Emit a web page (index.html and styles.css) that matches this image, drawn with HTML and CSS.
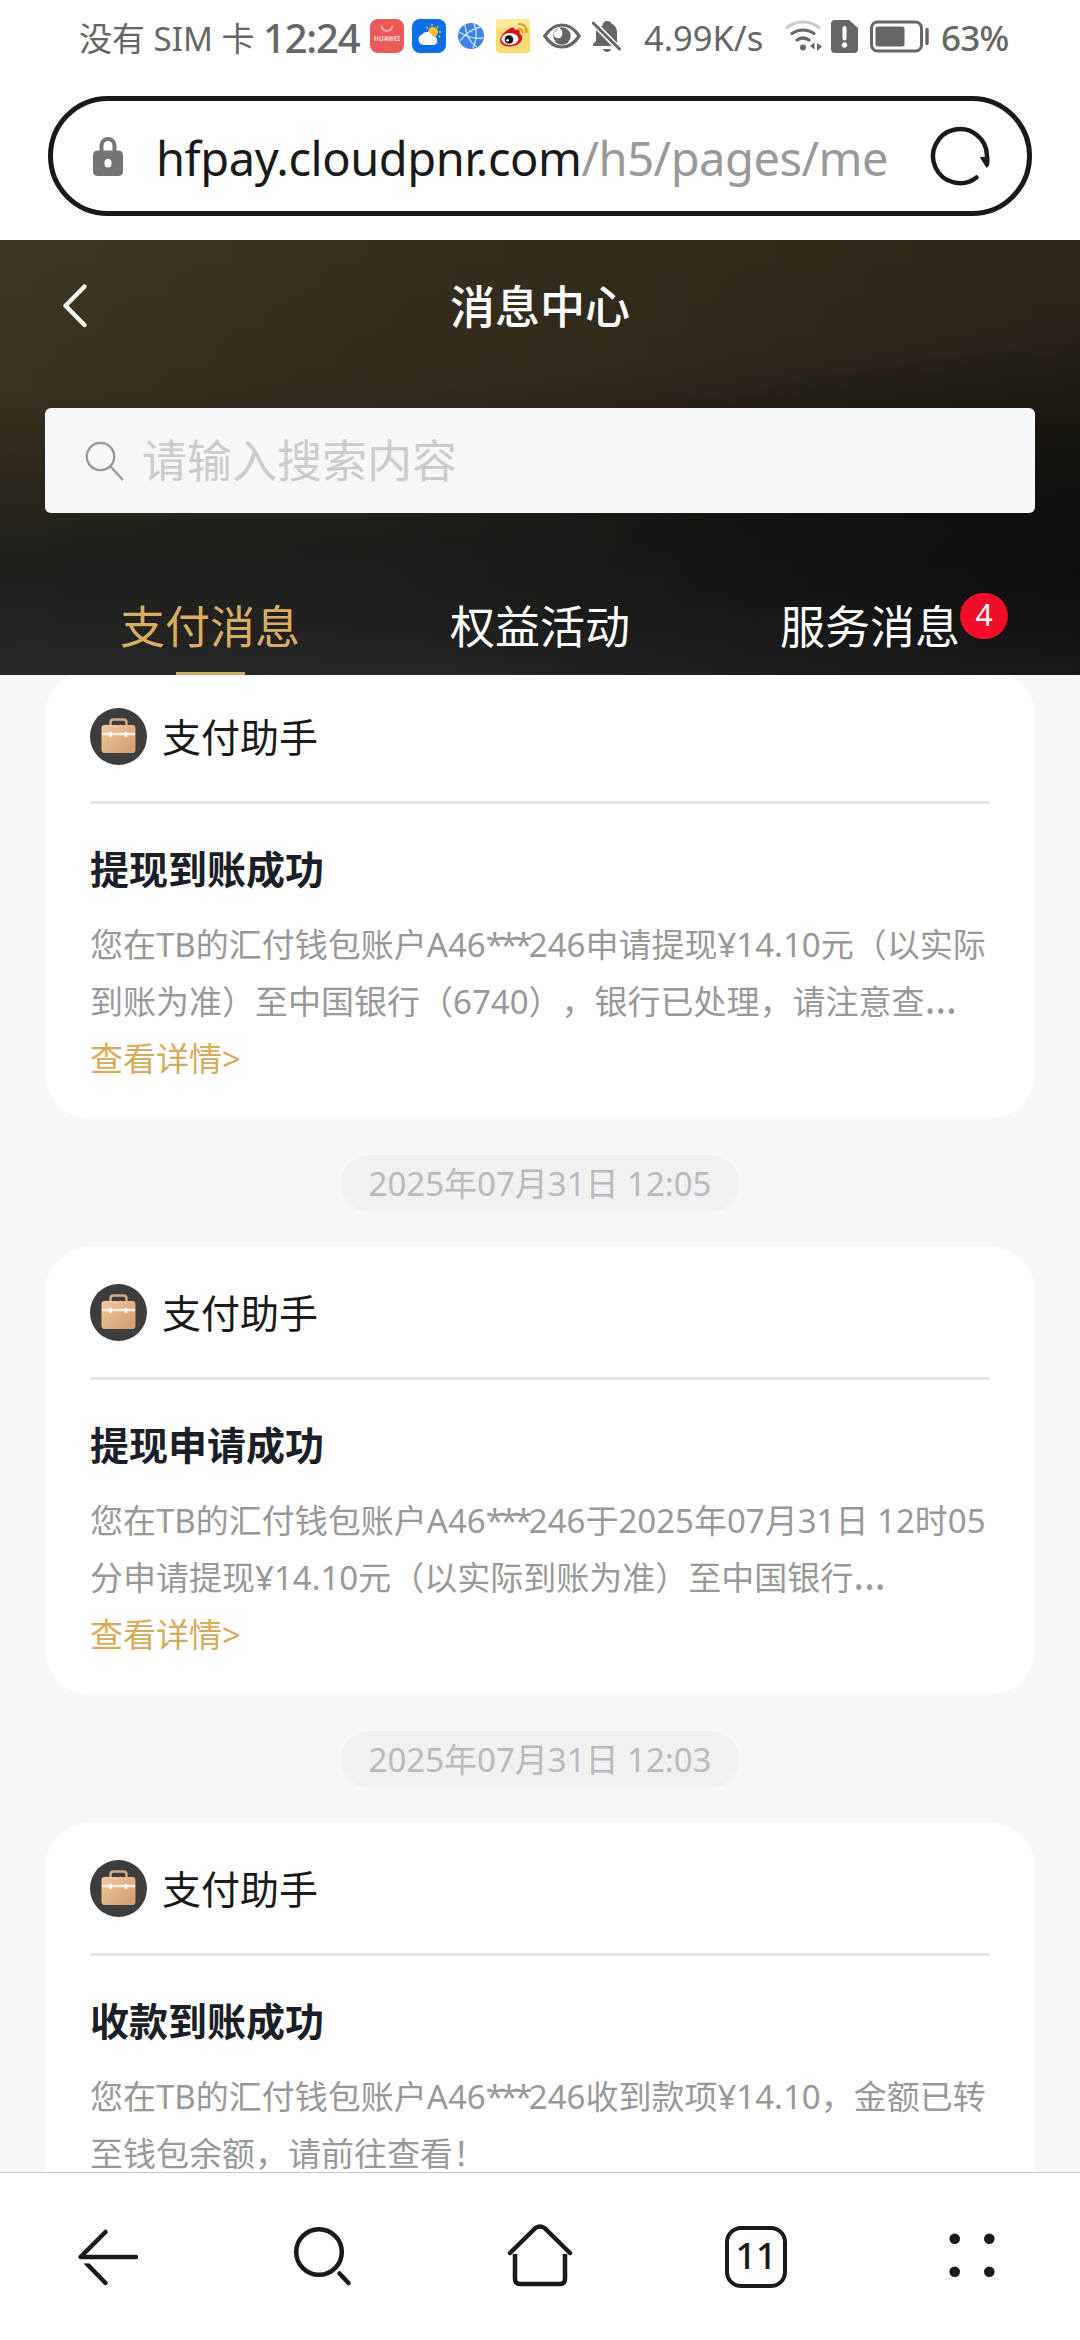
FILE: index.html
```html
<!DOCTYPE html>
<html lang="zh-CN">
<head>
<meta charset="utf-8">
<title>消息中心</title>
<link rel="stylesheet" href="styles.css">
</head>
<body>
<svg class="defs" width="0" height="0" aria-hidden="true">
  <defs>
    <linearGradient id="case" x1="0" y1="0" x2="1" y2="1">
      <stop offset="0" stop-color="#f3c9a2"/><stop offset="1" stop-color="#d09a6c"/>
    </linearGradient>
    <symbol id="briefcase" viewBox="0 0 57 57">
      <circle cx="28.500" cy="28.500" r="28.500" fill="#3d3d3d"/>
      <path d="M20.500 18v-3.500q0-3 3-3h10q3 0 3 3V18" fill="none" stroke="#d5ab88" stroke-width="2.400"/>
      <rect x="11.500" y="17" width="34" height="28" rx="3" fill="url(#case)"/>
      <path d="M12 26h33" stroke="#fff0e0" stroke-width="2.500"/>
      <path d="M20.500 24v5M36 24v5" stroke="#fff" stroke-width="2.500"/>
    </symbol>
  </defs>
</svg>
<div class="screen">
  <div class="status">
    <span class="carrier">没有 SIM 卡</span>
    <span class="clock">12:24</span>
    <svg class="app-huawei" width="34" height="34" viewBox="0 0 34 34"><rect width="34" height="34" rx="8" fill="#ea5a58"/><path d="M11.500 6.500a5.500 5.500 0 0 0 11 0" fill="none" stroke="#fbb" stroke-width="1.500"/><text class="huawei-word" x="17" y="22" text-anchor="middle" textLength="26" lengthAdjust="spacingAndGlyphs">HUAWEI</text></svg>
    <svg class="app-weather" width="34" height="34" viewBox="0 0 34 34"><rect width="34" height="34" rx="8" fill="#0c6fe8"/><circle cx="21" cy="13" r="5" fill="#fcc02c"/><path d="M20 5v2M26 7.500l-1 1.500M29 13h-2M28 18l-1.500-1M14.500 8l1.500 1.500" stroke="#fcc02c" stroke-width="1.600"/><path d="M11 26a5.500 5.500 0 0 1-1-10.500 6 6 0 0 1 10.500 1.500A4.600 4.600 0 0 1 22 26z" fill="#fff"/></svg>
    <svg class="app-globe" width="26" height="26" viewBox="0 0 26 26"><circle cx="13" cy="13" r="13" fill="#3f83e8"/><path d="M7 1.500Q8 17 19 24M22 4Q10 7 2 18M1 9Q14 17 25 15M16 .5Q21 12 15 25" fill="none" stroke="#cfe2ff" stroke-width="1.300"/></svg>
    <svg class="app-weibo" width="34" height="34" viewBox="0 0 34 34"><rect width="34" height="34" rx="4" fill="#fbdc72"/><rect width="34" height="10" rx="4" fill="#fde99b"/><path d="M14 9.500c3-2 5-1 4.500 1.500 4-1.500 6 0 5 3.500 5 2 3.500 12-9 13C4 28 2.500 21 5.500 17c2-3 5-6 8.500-7.500z" fill="#d8121c"/><ellipse cx="14" cy="20" rx="8.500" ry="6" fill="#fff"/><circle cx="13" cy="20.500" r="4.300" fill="#111"/><circle cx="11.600" cy="21.300" r="1.300" fill="#fff"/><path d="M22 9.500q5-.5 4.500 4.500M22 5q9-.5 8.500 9" fill="none" stroke="#dc9b1a" stroke-width="2"/></svg>
    <svg class="eye" width="38" height="26" viewBox="0 0 38 26"><path d="M1.800 13Q9 2 19 2t17.200 11Q29 24 19 24T1.800 13z" fill="none" stroke="#666" stroke-width="3.200"/><circle cx="19" cy="13" r="8.700" fill="#666"/><path d="M19 12.500a4.500 4.500 0 0 1-8.600-1.900L16 4.800a6.500 6.500 0 0 1 3 7.700z" fill="#fff"/></svg>
    <svg class="bell" width="30" height="33" viewBox="0 0 30 33"><path d="M10.500 5.500Q11 1 15 1t4.500 2.500Q25 6 25 13v9l2 4H1v-2l3-3v-8q0-3 1.500-5z" fill="#666"/><path d="M11 29h8q-1 3-4 3t-4-3z" fill="#666"/><path d="M0 1.500L29 31" stroke="#fff" stroke-width="6"/><path d="M1.200 3L27.500 29" stroke="#666" stroke-width="3" stroke-linecap="round"/></svg>
    <span class="speed">4.99K/s</span>
    <svg class="wifi" width="38" height="32" viewBox="0 0 38 32"><g fill="none" stroke-linecap="round" stroke-width="3.200"><path d="M2 7.500Q9 2 18 2t16 5.500" stroke="#ccc"/><path d="M7 13.500Q12 10 18 10t11 3.500" stroke="#666"/><path d="M12 20q6-4 12 0" stroke="#666"/></g><circle cx="18" cy="27.500" r="3" fill="#666"/><path d="M29.500 22.500v7l-4.500-3.500zM32 23v8l5-4.500z" fill="#666"/></svg>
    <svg class="sim" width="27" height="33" viewBox="0 0 27 33"><path d="M4 0h14l9 8v21q0 4-4 4H4q-4 0-4-4V4q0-4 4-4z" fill="#666"/><path d="M13.500 8v10.500" stroke="#fff" stroke-width="4" stroke-linecap="round"/><circle cx="13.500" cy="25" r="2.700" fill="#fff"/></svg>
    <svg class="battery" width="60" height="33" viewBox="0 0 60 33"><rect x="1.500" y="2" width="50" height="29" rx="6" fill="none" stroke="#666" stroke-width="3"/><rect x="5.500" y="6.500" width="29" height="20" rx="2.500" fill="#666"/><path d="M57 9.500v14" stroke="#666" stroke-width="3.400" stroke-linecap="round"/></svg>
    <span class="percent">63%</span>
  </div>

  <div class="address">
    <svg width="30" height="40" viewBox="0 0 30 40"><path d="M8.500 16V9.500a6.500 6.500 0 0 1 13 0V16" fill="none" stroke="#757575" stroke-width="4"/><path fill-rule="evenodd" d="M5 14.500h20q5 0 5 5V35q0 5-5 5H5q-5 0-5-5V19.500q0-5 5-5zM15 23a3.500 3.500 0 0 0-3.500 3.500v1.500a3.500 3.500 0 0 0 7 0v-1.500A3.500 3.500 0 0 0 15 23z" fill="#757575"/></svg>
    <div class="url"><span class="host">hfpay.cloudpnr.com</span><span class="path">/h5/pages/me</span></div>
    <svg width="60" height="60" viewBox="0 0 60 60"><path d="M57 30A27 27 0 1 0 46.500 51.500" fill="none" stroke="#1a1a1a" stroke-width="4.500" stroke-linecap="round"/><path d="M50.500 31.500l8.500-.5v6q-1.500 6-3 3.500z" fill="#1a1a1a" stroke="#1a1a1a"/></svg>
  </div>

  <header class="header">
    <div class="titlebar">
      <svg width="26" height="44" viewBox="0 0 26 44"><path d="M22.500 2.500L3.500 21.700l19 19.300" fill="none" stroke="#fff" stroke-width="4.300" stroke-linecap="round" stroke-linejoin="round"/></svg>
      <h1>消息中心</h1>
    </div>
    <div class="search">
      <svg width="39" height="40" viewBox="0 0 39 40"><circle cx="15.500" cy="15.500" r="13.700" fill="none" stroke="#999" stroke-width="2.300"/><path d="M25.500 25.500L38 39" stroke="#999" stroke-width="2.300"/></svg>
      <span>请输入搜索内容</span>
    </div>
    <nav class="tabs">
      <div class="tab active"><span>支付消息</span></div>
      <div class="tab"><span>权益活动</span></div>
      <div class="tab"><span>服务消息<b class="badge">4</b></span></div>
    </nav>
  </header>

  <main class="feed">
    <article class="card first">
      <div class="sender"><svg width="57" height="57"><use href="#briefcase"/></svg><span>支付助手</span></div>
      <h2>提现到账成功</h2>
      <p><span>您在TB的汇付钱包账户A46<i class="mask">***</i>246申请提现¥14.10元（以实际</span><span>到账为准）至中国银行（6740），银行已处理，请注意查<i class="dots">…</i></span></p>
      <a class="more">查看详情&gt;</a>
    </article>
    <time class="stamp">2025年07月31日 12:05</time>
    <article class="card">
      <div class="sender"><svg width="57" height="57"><use href="#briefcase"/></svg><span>支付助手</span></div>
      <h2>提现申请成功</h2>
      <p><span>您在TB的汇付钱包账户A46<i class="mask">***</i>246于2025年07月31日 12时05</span><span>分申请提现¥14.10元（以实际到账为准）至中国银行<i class="dots">…</i></span></p>
      <a class="more">查看详情&gt;</a>
    </article>
    <time class="stamp">2025年07月31日 12:03</time>
    <article class="card">
      <div class="sender"><svg width="57" height="57"><use href="#briefcase"/></svg><span>支付助手</span></div>
      <h2>收款到账成功</h2>
      <p><span>您在TB的汇付钱包账户A46<i class="mask">***</i>246收到款项¥14.10，金额已转</span><span>至钱包余额，请前往查看！</span></p>
    </article>
  </main>

  <footer class="toolbar">
    <svg width="64" height="64" viewBox="0 0 64 64"><g fill="none" stroke="#1a1a1a" stroke-width="4.500" stroke-linecap="round"><path d="M29.500 7L4.500 32H60" stroke-linejoin="round"/><path d="M10 38l19.500 20"/></g><path d="M6 36.700h10" stroke="#fff" stroke-width="3.400"/></svg>
    <svg width="64" height="64" viewBox="0 0 64 64"><g fill="none" stroke="#1a1a1a" stroke-width="4.500" stroke-linecap="round"><circle cx="27" cy="27" r="22.800"/><path d="M47.500 48.500l9 9.500"/></g></svg>
    <svg width="68" height="68" viewBox="0 0 68 68"><g fill="none" stroke="#1a1a1a" stroke-width="4.500"><path d="M4 30L29.500 5q4.500-3 9 0L64 30" stroke-linecap="round"/><path d="M9 31v25q0 5 5 5h40q5 0 5-5V31"/></g></svg>
    <div class="tabcount">11</div>
    <svg width="64" height="64" viewBox="0 0 64 64" fill="#1a1a1a"><circle cx="14.700" cy="13.700" r="5.300"/><circle cx="49.300" cy="13.700" r="5.300"/><circle cx="14.700" cy="46.700" r="5.300"/><circle cx="49.300" cy="46.700" r="5.300"/></svg>
  </footer>
</div>
</body>
</html>
```
FILE: styles.css
```css
* { box-sizing: border-box; margin: 0; padding: 0; }
body {
  width: 1080px;
  height: 2340px;
  overflow: hidden;
  background: #fff;
  font-family: "Noto Sans", "Noto Sans CJK SC", sans-serif;
  color: #1a1a1a;
  text-spacing-trim: space-all;
}
svg { display: block; flex: none; }
.defs { position: absolute; }
.screen { display: flex; flex-direction: column; width: 1080px; height: 2340px; }

.status {
  display: flex;
  align-items: center;
  height: 72px;
  padding-left: 79px;
  color: #666;
  white-space: nowrap;
}
.carrier { width: 184px; padding-top: 2px; font-size: 33px; }
.clock { width: 107px; padding-top: 2px; font-size: 40px; font-weight: 500; letter-spacing: -1.2px; }
.app-weather { margin-left: 8px; }
.app-globe { margin-left: 12px; }
.app-weibo { margin-left: 12px; }
.eye { margin-left: 13px; }
.bell { margin-left: 11px; }
.speed { width: 141px; margin-left: 22px; padding-top: 3px; font-size: 34.5px; }
.sim { margin-left: 8px; }
.battery { margin-left: 12px; }
.percent { margin-left: 11px; padding-top: 2px; font-size: 35px; font-weight: 500; letter-spacing: -.8px; }
.huawei-word { fill: #ffd5d5; font-size: 6.5px; font-weight: 700; }

.address {
  display: flex;
  align-items: center;
  width: 984px;
  height: 120px;
  margin: 24px 48px;
  padding: 0 37px 0 40px;
  border: 5px solid #1a1a1a;
  border-radius: 60px;
}
.url {
  flex: 1;
  margin-left: 33px;
  padding-top: 3px;
  font-size: 47px;
  letter-spacing: -.45px;
  white-space: nowrap;
}
.path { color: #999; }

.header {
  display: flex;
  flex-direction: column;
  height: 435px;
  padding: 0 45px;
  color: #fff;
  background:
    radial-gradient(ellipse 700px 260px at 1080px 330px, rgba(0, 0, 0, .4), rgba(0, 0, 0, 0)),
    linear-gradient(90deg, rgba(0, 0, 0, 0) 0%, rgba(0, 0, 0, .3) 100%),
    linear-gradient(177deg, #3f3723 0%, #3a3222 32%, #2b261b 50%, #20201d 66%, #232322 80%, #2e2e2f 100%);
}
.titlebar {
  display: grid;
  grid-template-columns: 100px 1fr 100px;
  align-items: center;
  height: 132px;
}
.titlebar svg { margin-left: 17px; }
h1 { padding-top: 2px; font-size: 45px; font-weight: 500; text-align: center; line-height: 60px; }
.search {
  display: flex;
  align-items: center;
  height: 105px;
  margin-top: 36px;
  padding-left: 40px;
  border-radius: 6px;
  background: #f6f7f9;
  color: #ccc;
  font-size: 45px;
  line-height: 60px;
}
.search span { margin-left: 18px; }
.tabs { display: grid; grid-template-columns: repeat(3, 1fr); height: 162px; font-size: 45px; }
.tab {
  display: flex;
  flex-direction: column;
  align-items: center;
  padding-top: 82px;
  line-height: 64px;
}
.tab > span { position: relative; }
.tab.active { justify-content: space-between; color: #d8ac61; }
.tab.active::after { content: ""; width: 69px; height: 3px; background: #cbab72; }
.badge {
  position: absolute;
  left: 180px;
  top: -2px;
  width: 48px;
  height: 46px;
  border-radius: 24px;
  background: #f20d28;
  font-size: 30px;
  font-weight: 400;
  line-height: 43px;
  text-align: center;
}

.feed {
  display: flex;
  flex: 1;
  flex-direction: column;
  align-items: center;
  min-height: 0;
  overflow: hidden;
  background: #f6f7f9;
}
.card {
  flex: none;
  width: 990px;
  height: 448px;
  padding: 0 45px;
  border-radius: 45px;
  background: #fff;
}
.card.first { margin-top: -4px; }
.sender {
  display: flex;
  align-items: center;
  gap: 15px;
  height: 133px;
  border-bottom: 3px solid #e6e6e6;
  font-size: 39px;
  line-height: 56px;
}
.sender span { padding-top: 2px; }
h2 { margin-top: 37px; font-size: 39px; font-weight: 700; line-height: 56px; color: #1c1f28; }
p { margin-top: 19px; font-size: 33px; line-height: 57px; color: #999; white-space: nowrap; }
p span { display: block; height: 57px; }
.mask, .dots { font-style: normal; }
.mask { letter-spacing: -3.8px; }
.dots { font-size: 41px; line-height: 0; }
.more { display: block; font-size: 33px; line-height: 57px; color: #d4ac5c; }
.stamp {
  flex: none;
  width: 398px;
  height: 57px;
  margin: 36px 0 35px;
  border-radius: 29px;
  background: #f0f1f3;
  color: #bbb;
  font-size: 33px;
  line-height: 58px;
  text-align: center;
}

.toolbar {
  display: grid;
  grid-template-columns: repeat(5, 1fr);
  flex: none;
  place-items: center;
  height: 168px;
  padding-top: 1px;
  border-top: 1px solid #c4c6c9;
  background: #fff;
}
.tabcount {
  width: 62px;
  height: 62px;
  border: 4.500px solid #1a1a1a;
  border-radius: 16px;
  font-size: 36px;
  font-weight: 500;
  line-height: 52px;
  text-align: center;
}
```
